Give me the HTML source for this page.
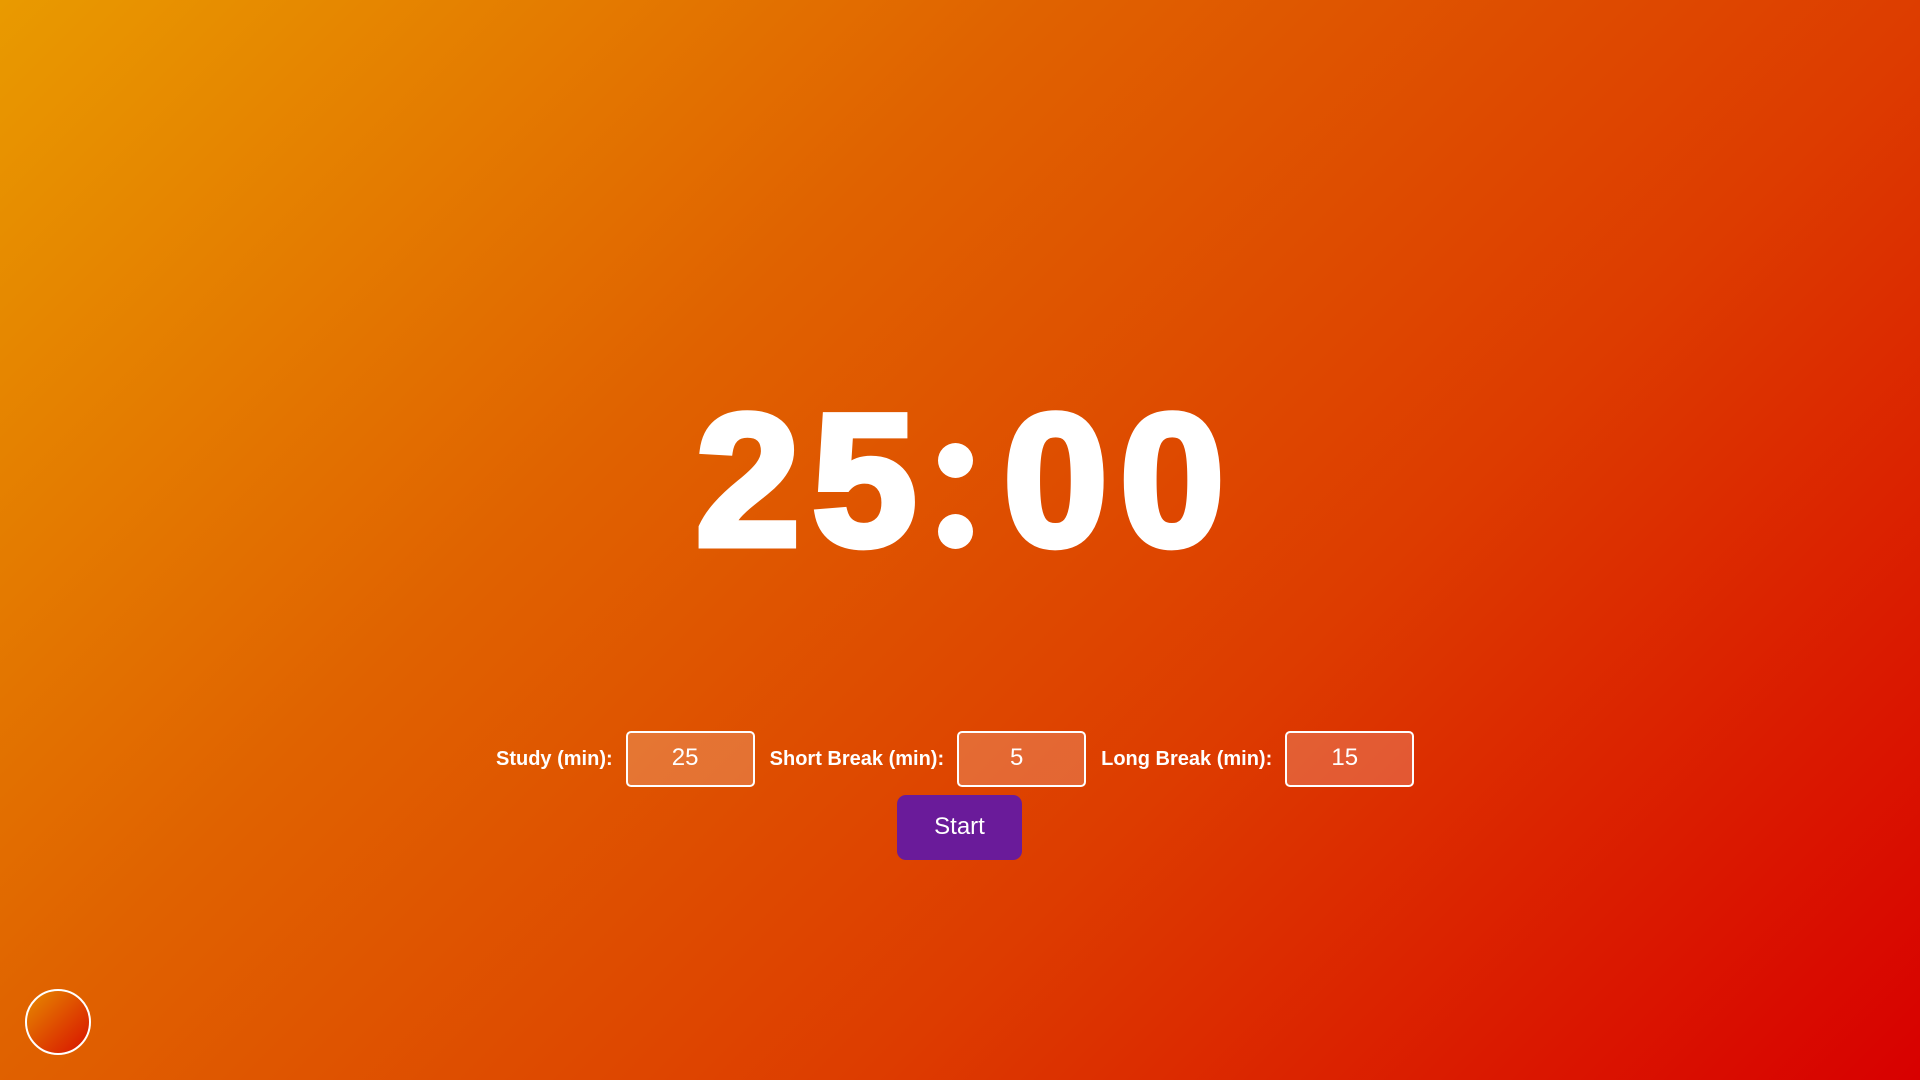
<!DOCTYPE html>
<html><head><style>
html,body{margin:0;width:1920px;height:1080px;overflow:hidden}
body{background:linear-gradient(135deg,#e99a00 0%,#e06200 35%,#dd3c00 65%,#d80000 100%);font-family:"Liberation Sans",sans-serif;position:relative}
.t{position:absolute;left:0;width:1920px;top:360px;text-align:center;color:#fff;font-weight:bold;font-size:188px;line-height:240px;-webkit-text-stroke:7px #fff;letter-spacing:12px;padding-left:12px;box-sizing:border-box}
.t span{color:transparent;-webkit-text-stroke:0}
.dot{position:absolute;left:938px;width:35px;height:35px;border-radius:50%;background:#fff}
.row{position:absolute;top:731px;left:496px;display:flex;align-items:center;height:56px}
.row label{color:#fff;font-weight:bold;font-size:20px;margin-right:13px}
.in{height:52px;border:2px solid #fff;border-radius:5px;background:rgba(255,255,255,0.2);color:#fff;font-size:24px;text-align:center;line-height:50px;margin-right:15px;padding-right:10px;box-sizing:content-box}
.btn{position:absolute;left:897px;top:795px;width:125px;height:65px;background:#6a1b9a;border-radius:9px;color:#fff;font-size:24px;text-align:center;line-height:64px}
.c{position:absolute;left:25px;top:989px;width:62px;height:62px;border:2px solid #fff;border-radius:50%;background:linear-gradient(135deg,#e68a00,#d81000)}
</style></head><body>
<div class="t">25<span>:</span>00</div>
<div class="dot" style="top:443px"></div>
<div class="dot" style="top:514px"></div>
<div class="row"><label>Study (min):</label><div class="in" style="width:115px">25</div><label>Short Break (min):</label><div class="in" style="width:115px">5</div><label>Long Break (min):</label><div class="in" style="width:115px">15</div></div>
<div class="btn">Start</div>
<div class="c"></div>
</body></html>
